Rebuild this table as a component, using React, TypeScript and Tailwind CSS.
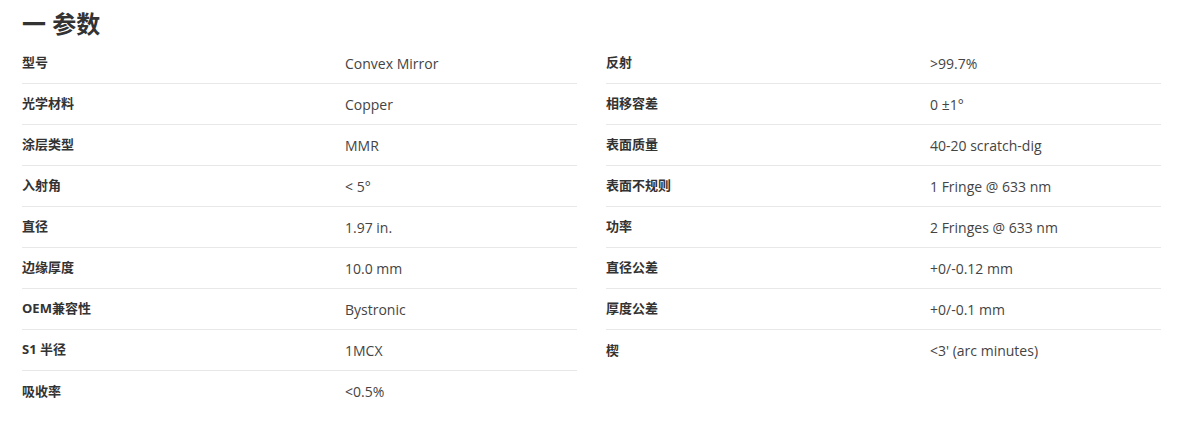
const left: [string, string][] = [
  ["型号", "Convex Mirror"],
  ["光学材料", "Copper"],
  ["涂层类型", "MMR"],
  ["入射角", "< 5°"],
  ["直径", "1.97 in."],
  ["边缘厚度", "10.0 mm"],
  ["OEM兼容性", "Bystronic"],
  ["S1 半径", "1MCX"],
  ["吸收率", "<0.5%"],
];

const right: [string, string][] = [
  ["反射", ">99.7%"],
  ["相移容差", "0 ±1°"],
  ["表面质量", "40-20 scratch-dig"],
  ["表面不规则", "1 Fringe @ 633 nm"],
  ["功率", "2 Fringes @ 633 nm"],
  ["直径公差", "+0/-0.12 mm"],
  ["厚度公差", "+0/-0.1 mm"],
  ["楔", "<3' (arc minutes)"],
];

function SpecTable({ rows, labelW }: { rows: [string, string][]; labelW: string }) {
  return (
    <div className="w-[555px] flex flex-col">
      {rows.map(([k, v], i) => (
        <div
          key={k}
          className={
            "flex items-center h-[41px] " +
            (i < rows.length - 1 ? "border-b border-[#e8e8e8]" : "")
          }
        >
          <div className={labelW + " text-[13px] font-bold text-[#333]"}>{k}</div>
          <div className="flex-1 text-[14px] text-[#444]">{v}</div>
        </div>
      ))}
    </div>
  );
}

export default function App() {
  return (
    <div
      className="w-[1195px] h-[442px] bg-white px-[22px] pt-[6px]"
      style={{ fontFamily: '"Open Sans", "Noto Sans CJK SC", sans-serif' }}
    >
      <h2 className="text-[24px] font-bold text-[#333] leading-[36px] mb-[1px]">一 参数</h2>
      <div className="flex gap-[29px]">
        <SpecTable rows={left} labelW="w-[323px]" />
        <SpecTable rows={right} labelW="w-[324px]" />
      </div>
    </div>
  );
}
